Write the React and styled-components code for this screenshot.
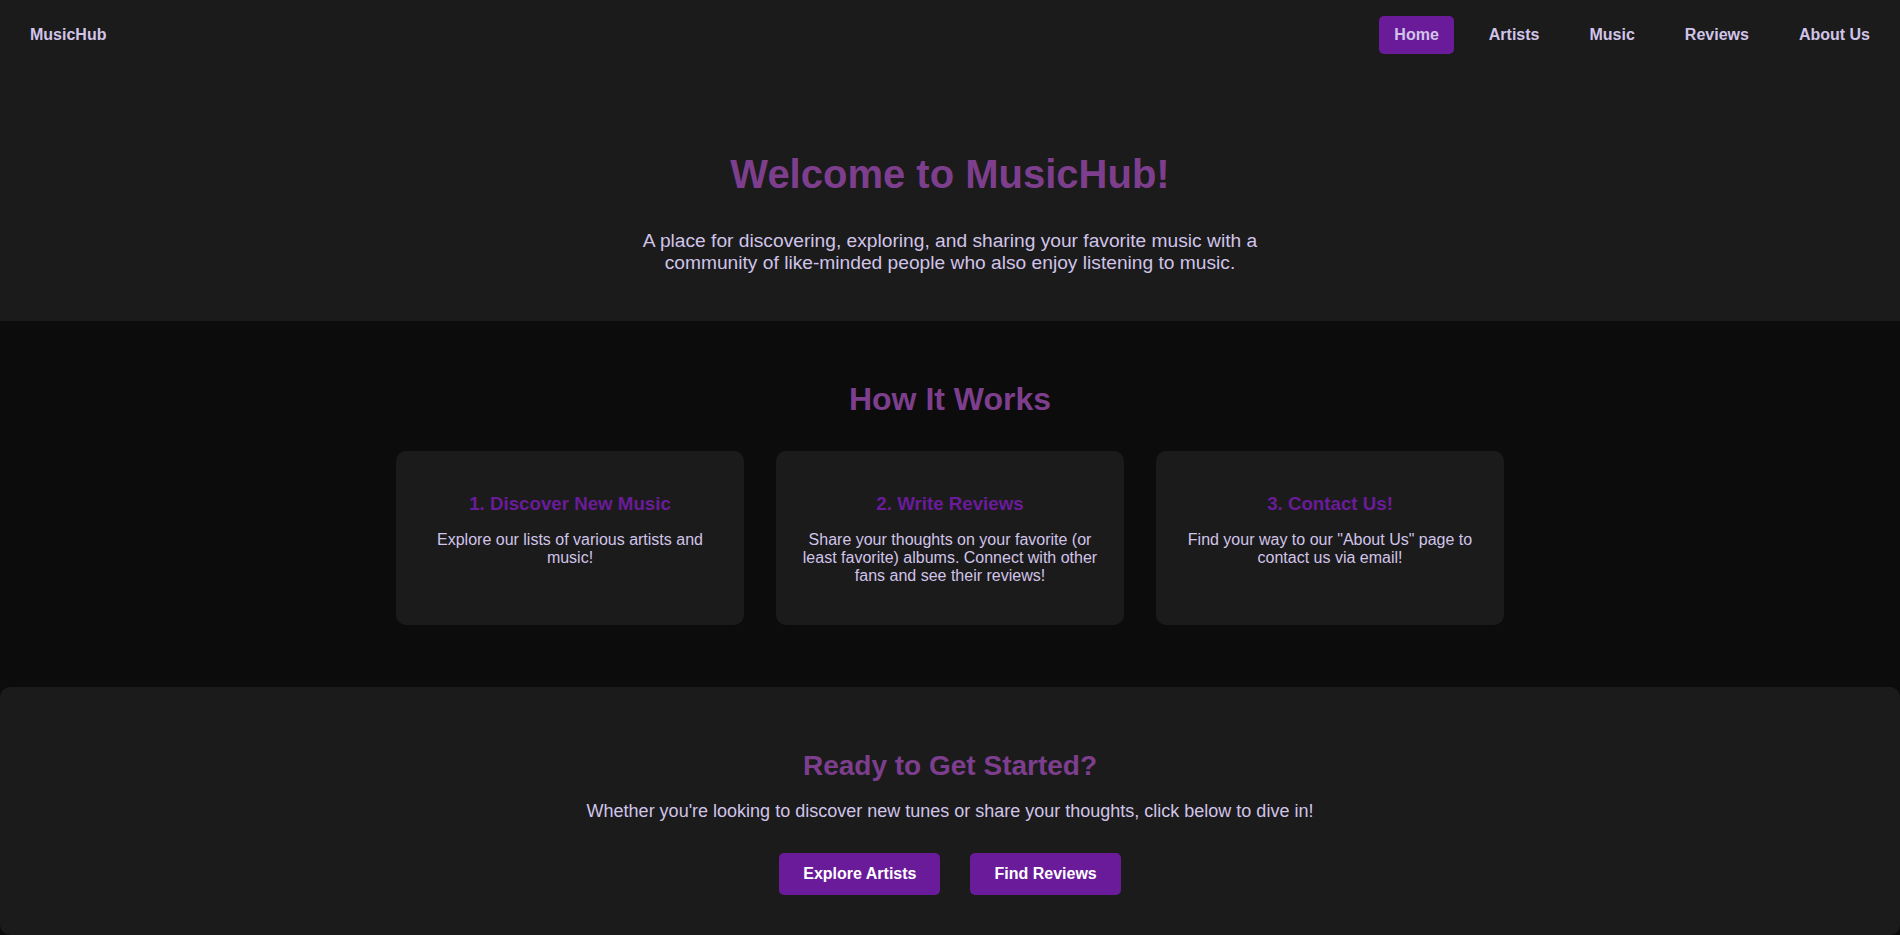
import React from "react";
import styled, { createGlobalStyle } from "styled-components";

const GlobalStyle = createGlobalStyle`
  * { box-sizing: border-box; }
  html, body {
    margin: 0;
    padding: 0;
    background: #0c0c0c;
    font-family: "Liberation Sans", Arial, sans-serif;
    color: #d1c4e9;
  }
`;

const Page = styled.div`
  display: flex;
  flex-direction: column;
  min-height: 935px;
`;

const Header = styled.header`
  display: flex;
  align-items: center;
  justify-content: space-between;
  padding: 16px 15px 18px 30px;
  background: #1b1b1b;
`;

const Logo = styled.div`
  font-size: 16px;
  font-weight: bold;
  color: #d1c4e9;
  margin-bottom: 1px;
`;

const NavList = styled.nav`
  display: flex;
  align-items: center;
  gap: 20px;
`;

const NavLink = styled.a`
  display: block;
  padding: 10px 15px;
  border-radius: 5px;
  font-size: 16px;
  font-weight: bold;
  color: #d1c4e9;
  text-decoration: none;
  background: ${(p) => (p.$active ? "#6a1b9a" : "transparent")};
  cursor: pointer;
`;

const Hero = styled.section`
  background: #1b1b1b;
  text-align: center;
  padding: 80px 20px 47px;
`;

const HeroTitle = styled.h1`
  margin: 0 0 33px;
  font-size: 40px;
  font-weight: bold;
  color: #7d3f8d;
`;

const HeroText = styled.p`
  margin: 0 auto;
  max-width: 640px;
  font-size: 19.2px;
  color: #d1c4e9;
`;

const HowSection = styled.section`
  background: #0c0c0c;
  text-align: center;
  padding: 60px 20px 62px;
`;

const SectionTitle = styled.h2`
  margin: 0 0 ${(p) => p.$gap}px;
  font-size: ${(p) => p.$size}px;
  font-weight: bold;
  color: #7d3f8d;
`;

const Cards = styled.div`
  display: flex;
  justify-content: center;
  align-items: stretch;
  gap: 32px;
`;

const Card = styled.div`
  width: 348px;
  padding: 42px 24px 40px;
  background: #1b1b1b;
  border-radius: 10px;
`;

const CardTitle = styled.h3`
  margin: 0 0 16px;
  font-size: 18.72px;
  font-weight: bold;
  color: #6a1b9a;
`;

const CardText = styled.p`
  margin: 0;
  font-size: 16px;
  color: #d1c4e9;
`;

const Cta = styled.section`
  background: #1b1b1b;
  border-radius: 10px;
  text-align: center;
  padding: 63px 20px 40px;
`;

const CtaText = styled.p`
  margin: 0 0 31px;
  font-size: 18px;
  color: #d1c4e9;
`;

const ButtonRow = styled.div`
  display: flex;
  justify-content: center;
  gap: 30px;
`;

const Button = styled.a`
  display: inline-block;
  padding: 12px 24px;
  background: #6a1b9a;
  color: #ffffff;
  font-size: 16px;
  font-weight: bold;
  border-radius: 5px;
  text-decoration: none;
  cursor: pointer;
`;

const navItems = ["Home", "Artists", "Music", "Reviews", "About Us"];

const steps = [
  {
    title: "1. Discover New Music",
    text: "Explore our lists of various artists and music!",
  },
  {
    title: "2. Write Reviews",
    text: "Share your thoughts on your favorite (or least favorite) albums. Connect with other fans and see their reviews!",
  },
  {
    title: "3. Contact Us!",
    text: 'Find your way to our "About Us" page to contact us via email!',
  },
];

export default function App() {
  return (
    <>
      <GlobalStyle />
      <Page>
        <Header>
          <Logo>MusicHub</Logo>
          <NavList>
            {navItems.map((item) => (
              <NavLink key={item} $active={item === "Home"}>
                {item}
              </NavLink>
            ))}
          </NavList>
        </Header>

        <Hero>
          <HeroTitle>Welcome to MusicHub!</HeroTitle>
          <HeroText>
            A place for discovering, exploring, and sharing your favorite music
            with a community of like-minded people who also enjoy listening to
            music.
          </HeroText>
        </Hero>

        <HowSection>
          <SectionTitle $size={32} $gap={33}>How It Works</SectionTitle>
          <Cards>
            {steps.map((s) => (
              <Card key={s.title}>
                <CardTitle>{s.title}</CardTitle>
                <CardText>{s.text}</CardText>
              </Card>
            ))}
          </Cards>
        </HowSection>

        <Cta>
          <SectionTitle $size={28} $gap={19}>Ready to Get Started?</SectionTitle>
          <CtaText>
            Whether you're looking to discover new tunes or share your thoughts,
            click below to dive in!
          </CtaText>
          <ButtonRow>
            <Button>Explore Artists</Button>
            <Button>Find Reviews</Button>
          </ButtonRow>
        </Cta>
      </Page>
    </>
  );
}
